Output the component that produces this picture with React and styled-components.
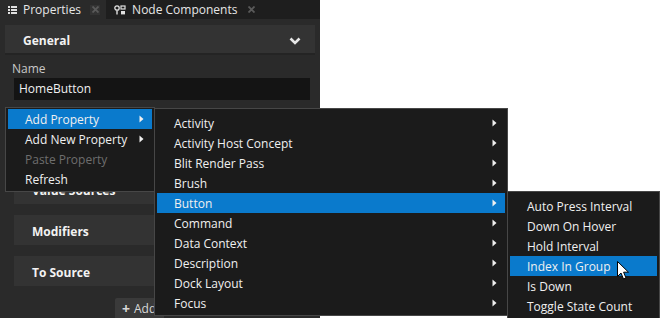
import React from 'react';
import styled, { createGlobalStyle } from 'styled-components';

const GlobalStyle = createGlobalStyle`
  html, body {
    margin: 0;
    padding: 0;
    background: #ffffff;
  }
  body {
    font-family: 'Open Sans', 'Noto Sans', sans-serif;
    font-size: 12px;
    color: #e8e8e8;
  }
`;

const mainItems = [
  { label: 'Add Property', sub: true, active: true },
  { label: 'Add New Property', sub: true },
  { label: 'Paste Property', disabled: true },
  { label: 'Refresh' },
];

const componentItems = [
  'Activity',
  'Activity Host Concept',
  'Blit Render Pass',
  'Brush',
  'Button',
  'Command',
  'Data Context',
  'Description',
  'Dock Layout',
  'Focus',
];

const buttonItems = [
  'Auto Press Interval',
  'Down On Hover',
  'Hold Interval',
  'Index In Group',
  'Is Down',
  'Toggle State Count',
];

function ListIcon() {
  return (
    <svg width='9' height='8' viewBox='0 0 9 8'>
      <rect x='0' y='0' width='2' height='2' fill='#e0e0e0' />
      <rect x='3' y='0' width='6' height='2' fill='#e0e0e0' />
      <rect x='0' y='3' width='2' height='2' fill='#e0e0e0' />
      <rect x='3' y='3' width='6' height='2' fill='#e0e0e0' />
      <rect x='0' y='6' width='2' height='2' fill='#e0e0e0' />
      <rect x='3' y='6' width='6' height='2' fill='#e0e0e0' />
    </svg>
  );
}

function NodeIcon() {
  return (
    <svg width='12' height='10' viewBox='0 0 12 10'>
      <circle cx='3' cy='3' r='2.2' fill='none' stroke='#e0e0e0' strokeWidth='1.3' />
      <rect x='2.3' y='5.5' width='1.4' height='4' fill='#e0e0e0' />
      <rect x='7' y='1' width='4' height='3' fill='none' stroke='#e0e0e0' strokeWidth='1.2' />
      <rect x='7' y='6' width='4' height='3.4' fill='#e0e0e0' />
    </svg>
  );
}

function CloseIcon() {
  return (
    <svg width='7' height='7' viewBox='0 0 7 7'>
      <path d='M0.5 0.5 L6.5 6.5 M6.5 0.5 L0.5 6.5' stroke='#5a5a5a' strokeWidth='1.8' />
    </svg>
  );
}

function Chevron() {
  return (
    <svg width='12' height='8' viewBox='0 0 12 8'>
      <path d='M1.5 1.5 L6 6 L10.5 1.5' fill='none' stroke='#e6e6e6' strokeWidth='2.6' />
    </svg>
  );
}

function SubArrow() {
  return (
    <svg width='5' height='8' viewBox='0 0 5 8'>
      <path d='M0.5 0.5 L4.5 4 L0.5 7.5 Z' fill='#f0f0f0' />
    </svg>
  );
}

function Cursor() {
  return (
    <svg width='13' height='20' viewBox='0 0 13 20'>
      <path
        d='M0.5 0.5 L0.5 15.5 L4 12 L6.5 18 L9 17 L6.6 11.2 L11.5 11.2 Z'
        fill='#ffffff'
        stroke='#000000'
        strokeWidth='1'
        strokeLinejoin='round'
      />
    </svg>
  );
}

function App() {
  return (
    <Page>
      <GlobalStyle />
      <Panel>
        <TabBar>
          <Tab $active>
            <ListIcon />
            <TabLabel>Properties</TabLabel>
            <TabClose $active>
              <CloseIcon />
            </TabClose>
          </Tab>
          <Tab>
            <NodeIcon />
            <TabLabel>Node Components</TabLabel>
            <TabClose>
              <CloseIcon />
            </TabClose>
          </Tab>
        </TabBar>
        <Body>
          <SectionHeader>
            <span>General</span>
            <Chevron />
          </SectionHeader>
          <Field>
            <FieldLabel>Name</FieldLabel>
            <TextInput>HomeButton</TextInput>
          </Field>
          <Groups>
            <SubHeader>Value Sources</SubHeader>
            <SubHeader>Modifiers</SubHeader>
            <SubHeader>To Source</SubHeader>
          </Groups>
          <AddRow>
            <AddButton>
              <span>+</span> Add
            </AddButton>
          </AddRow>
        </Body>
      </Panel>

      <Menu $left={5} $top={107} $width={150}>
        {mainItems.map((item) => (
          <MenuItem key={item.label} $active={item.active} $disabled={item.disabled}>
            <span>{item.label}</span>
            {item.sub && <SubArrow />}
          </MenuItem>
        ))}
      </Menu>

      <Menu $left={154} $top={108} $width={354} $pad={4}>
        {componentItems.map((label) => (
          <MenuItem key={label} $active={label === 'Button'}>
            <span>{label}</span>
            <SubArrow />
          </MenuItem>
        ))}
      </Menu>

      <Menu $left={507} $top={191} $width={153} $pad={4}>
        {buttonItems.map((label) => (
          <MenuItem key={label} $active={label === 'Index In Group'}>
            <span>{label}</span>
          </MenuItem>
        ))}
      </Menu>

      <Pointer>
        <Cursor />
      </Pointer>
    </Page>
  );
}

export default App;

const Page = styled.div`
  position: relative;
  width: 660px;
  height: 318px;
  overflow: hidden;
  display: flex;
  background: #ffffff;
`;

const Panel = styled.div`
  width: 320px;
  height: 318px;
  background: #2a2a2a;
  display: flex;
  flex-direction: column;
`;

const TabBar = styled.div`
  height: 20px;
  background: #1e1e1e;
  display: flex;
`;

const Tab = styled.div`
  display: flex;
  align-items: center;
  gap: 6px;
  padding: 0 6px 0 8px;
  background: ${(p) => (p.$active ? '#2a2a2a' : 'transparent')};
`;

const TabLabel = styled.span`
  font-size: 12px;
  color: #e6e6e6;
  margin-right: 3px;
`;

const TabClose = styled.span`
  display: flex;
  align-items: center;
  justify-content: center;
  width: 10px;
  height: 10px;
  background: ${(p) => (p.$active ? '#333333' : 'transparent')};
`;

const Body = styled.div`
  flex: 1;
  display: flex;
  flex-direction: column;
  padding: 6px 5px 0 5px;
`;

const SectionHeader = styled.div`
  height: 30px;
  box-sizing: border-box;
  padding: 3px 14px 0 18px;
  background: #333333;
  border-bottom: 2px solid #242424;
  display: flex;
  align-items: center;
  justify-content: space-between;
  font-weight: 700;
  font-size: 12px;
  color: #f2f2f2;
`;

const Field = styled.div`
  display: flex;
  flex-direction: column;
  padding: 5px 5px 0 7px;
`;

const FieldLabel = styled.div`
  font-size: 12px;
  color: #c8c8c8;
  height: 18px;
  line-height: 18px;
`;

const TextInput = styled.div`
  height: 22px;
  line-height: 22px;
  margin-left: 2px;
  background: #141414;
  padding-left: 5px;
  font-size: 12px;
  color: #f0f0f0;
`;

const Groups = styled.div`
  display: flex;
  flex-direction: column;
  gap: 11px;
  padding: 74px 5px 0 9px;
`;

const SubHeader = styled.div`
  height: 30px;
  box-sizing: border-box;
  padding: 2px 0 0 18px;
  background: #333333;
  display: flex;
  align-items: center;
  font-weight: 700;
  font-size: 12px;
  color: #f2f2f2;
`;

const AddRow = styled.div`
  display: flex;
  padding: 12px 0 0 110px;
`;

const AddButton = styled.div`
  height: 20px;
  display: flex;
  align-items: center;
  gap: 4px;
  padding: 0 8px 0 7px;
  background: #3a3a3a;
  border-radius: 2px 2px 0 0;
  color: #d8d8d8;
  font-size: 12px;

  span {
    font-weight: 700;
    font-size: 14px;
  }
`;

const Menu = styled.div`
  position: absolute;
  left: ${(p) => p.$left}px;
  top: ${(p) => p.$top}px;
  width: ${(p) => p.$width}px;
  box-sizing: border-box;
  background: #1b1b1b;
  border: 1px solid #474747;
  padding: ${(p) => p.$pad || 1}px 2px 2px 2px;
  display: flex;
  flex-direction: column;
`;

const MenuItem = styled.div`
  height: 20px;
  display: flex;
  align-items: center;
  justify-content: space-between;
  padding: 0 8px 0 17px;
  font-size: 12px;
  color: ${(p) => (p.$disabled ? '#6e6e6e' : '#f0f0f0')};
  background: ${(p) => (p.$active ? '#0a7acc' : 'transparent')};
`;

const Pointer = styled.div`
  position: absolute;
  left: 617px;
  top: 261px;
  display: flex;
`;
